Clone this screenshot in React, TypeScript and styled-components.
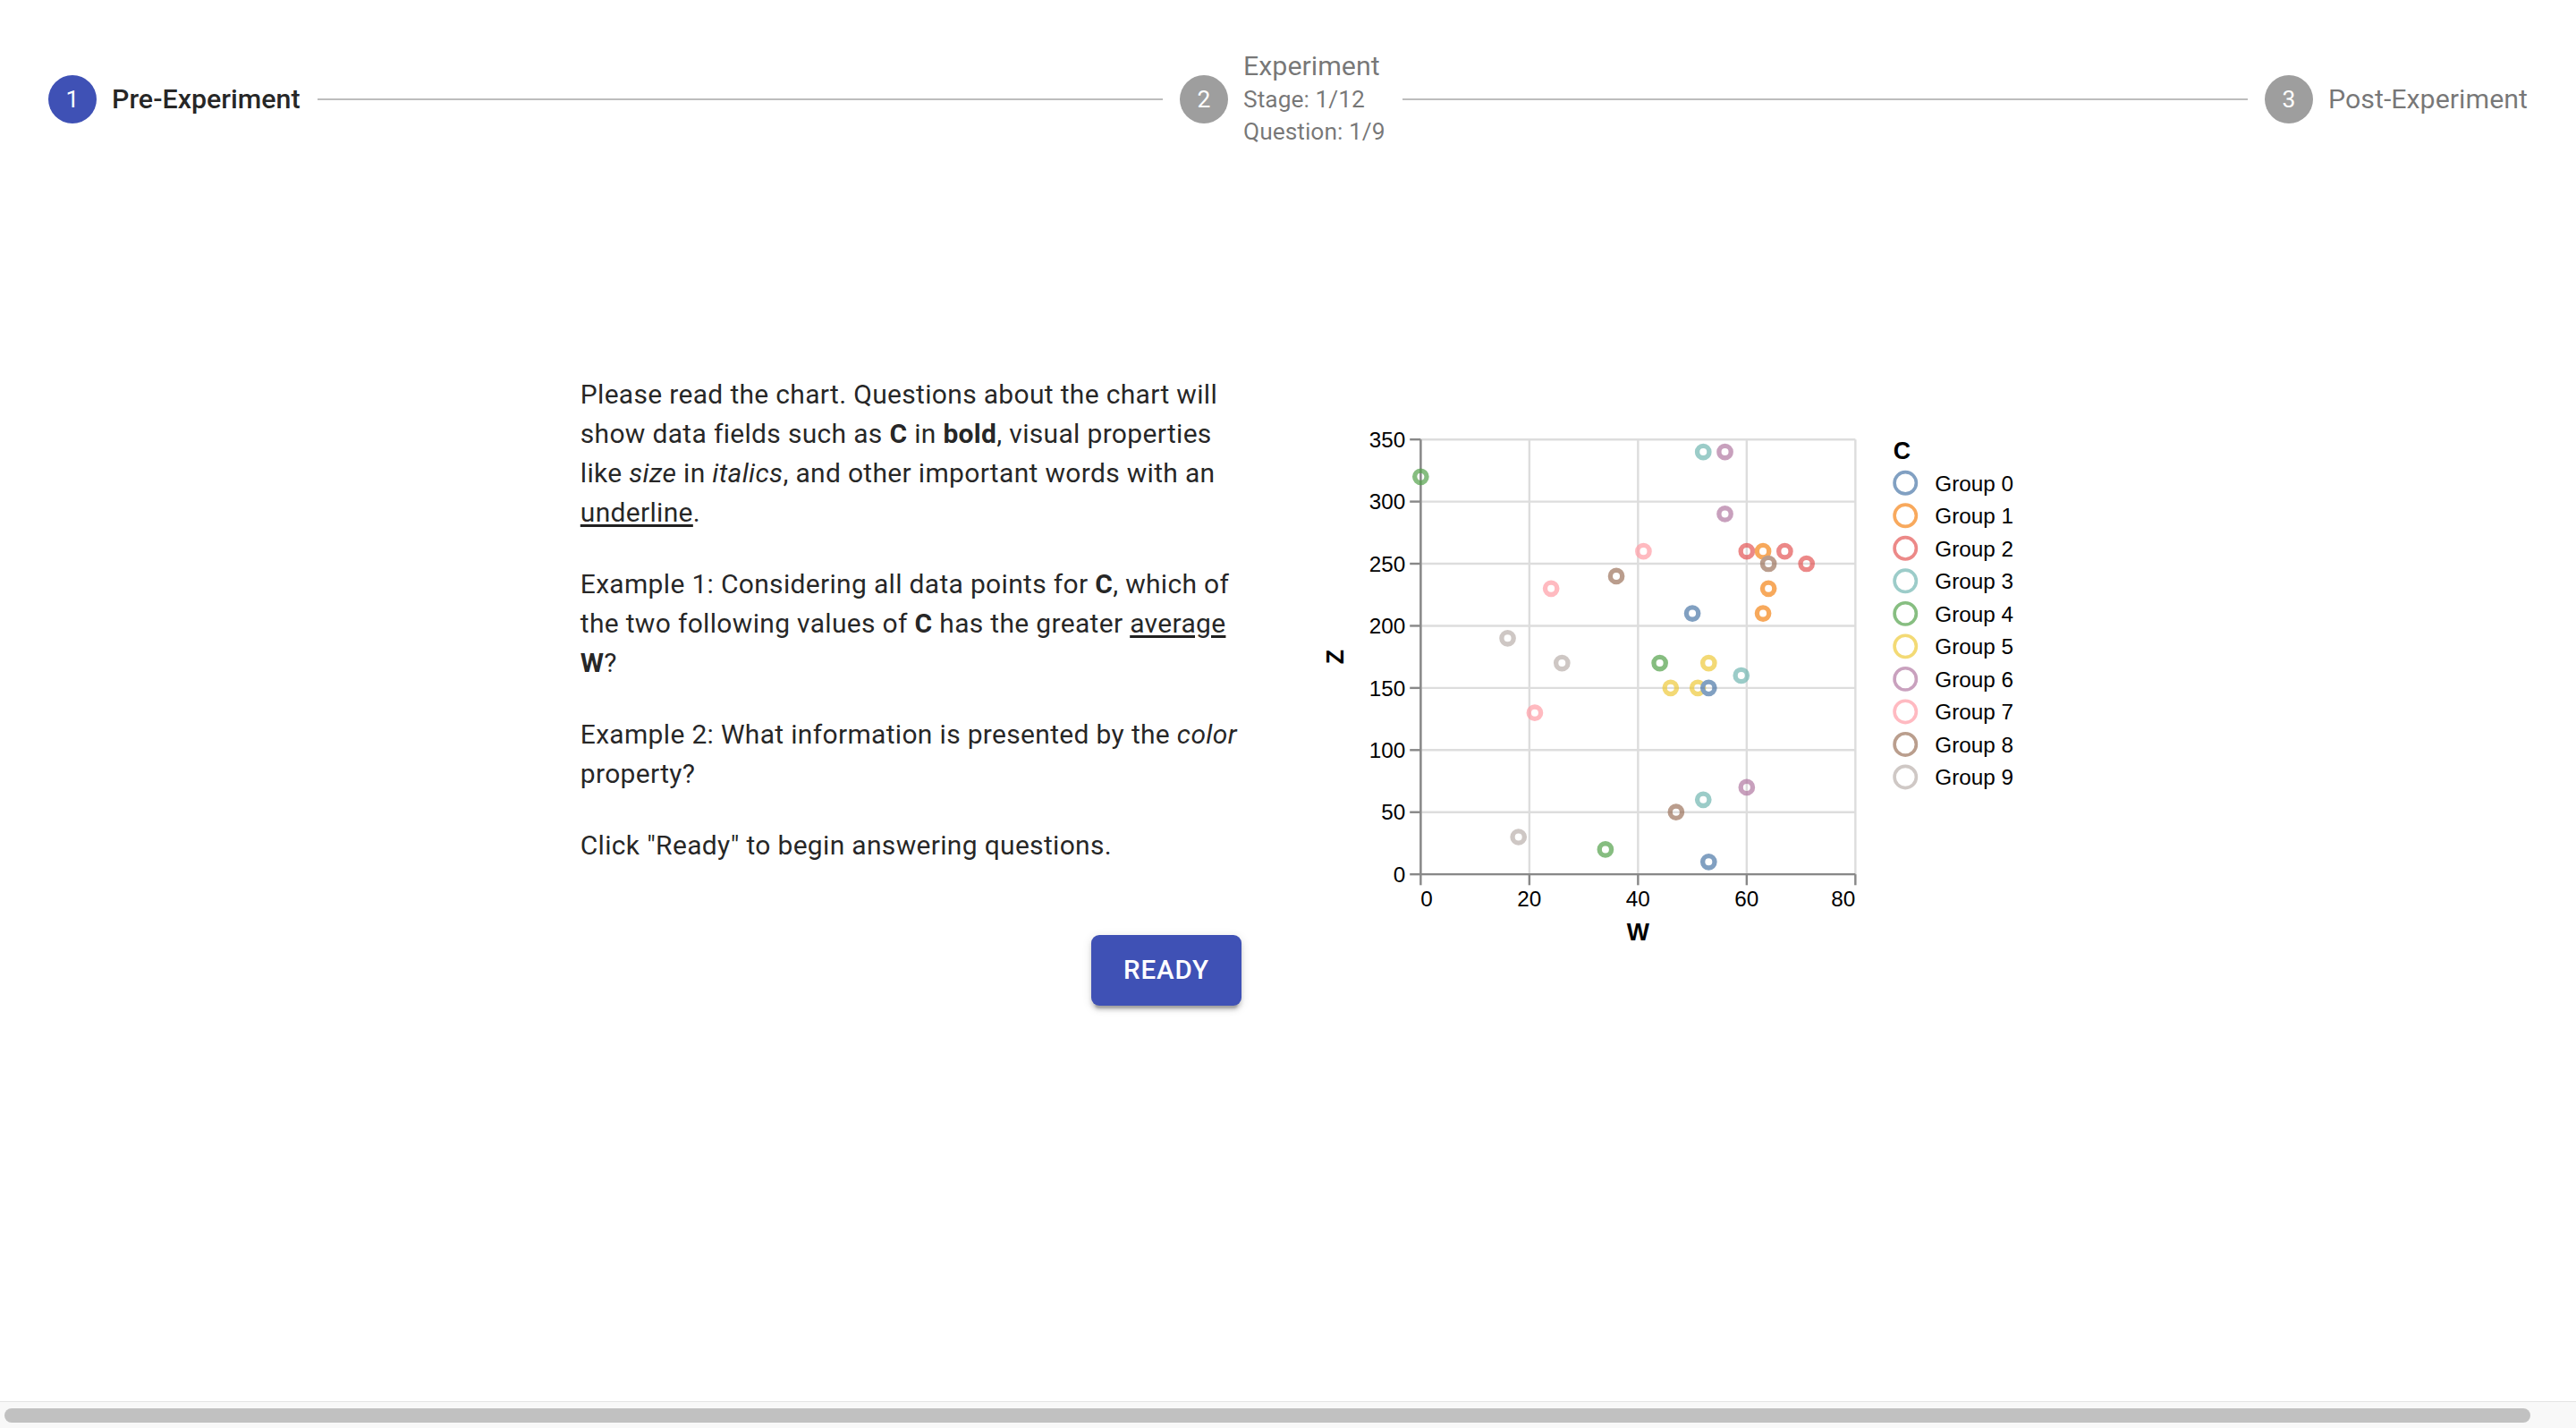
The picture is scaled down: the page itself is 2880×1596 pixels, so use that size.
import React from "react";
import styled, { createGlobalStyle } from "styled-components";

const GlobalStyle = createGlobalStyle`
  html, body {
    margin: 0;
    padding: 0;
    background: #ffffff;
  }
  body {
    font-family: Roboto, "Liberation Sans", Arial, sans-serif;
    color: rgba(0, 0, 0, 0.87);
  }
  * { box-sizing: border-box; }
`;

const Page = styled.div`
  min-height: 100vh;
`;

/* ---------- Stepper ---------- */
const Stepper = styled.nav`
  display: flex;
  align-items: center;
  padding: 56px 54px 0;
`;

const Step = styled.div`
  display: flex;
  align-items: center;
  gap: 17px;
  flex: none;
`;

const StepIcon = styled.div<{ $active?: boolean }>`
  width: 54px;
  height: 54px;
  border-radius: 50%;
  background: ${(p) => (p.$active ? "#3f51b5" : "#9e9e9e")};
  color: #ffffff;
  display: flex;
  align-items: center;
  justify-content: center;
  font-size: 26.4px;
  line-height: 1;
`;

const StepText = styled.div`
  display: flex;
  flex-direction: column;
`;

const StepLabel = styled.span<{ $active?: boolean }>`
  font-size: 30.4px;
  line-height: 36.6px;
  font-weight: ${(p) => (p.$active ? 500 : 400)};
  color: ${(p) => (p.$active ? "rgba(0,0,0,0.87)" : "rgba(0,0,0,0.54)")};
`;

const StepDetail = styled.span`
  font-size: 26.4px;
  line-height: 36.6px;
  color: rgba(0, 0, 0, 0.54);
`;

const Connector = styled.div`
  flex: 1;
  height: 0;
  border-top: 2px solid #bdbdbd;
  margin: 0 19px;
`;

/* ---------- Main ---------- */
const Main = styled.main`
  display: flex;
  justify-content: center;
  align-items: flex-start;
  gap: 82px;
  padding: 253px 0 0 30px;
`;

const TextColumn = styled.section`
  width: 748px;
  display: flex;
  flex-direction: column;
`;

const Paragraph = styled.p`
  margin: 0 0 36px;
  font-size: 30px;
  line-height: 44px;
  letter-spacing: 0.01071em;
  color: rgba(0, 0, 0, 0.87);
  &:last-of-type {
    margin-bottom: 0;
  }
`;

const Field = styled.b`
  font-weight: 700;
`;

const Em = styled.i`
  font-style: italic;
`;

const Under = styled.u`
  text-decoration: underline;
  text-underline-offset: 3px;
`;

const ReadyButton = styled.button`
  align-self: flex-end;
  margin: 78px 9px 0 0;
  height: 79px;
  padding: 0 36px;
  border: none;
  border-radius: 9px;
  background: #3f51b5;
  color: #ffffff;
  font-family: Roboto, "Liberation Sans", Arial, sans-serif;
  font-weight: 500;
  font-size: 29.5px;
  letter-spacing: 0.02857em;
  text-transform: uppercase;
  cursor: pointer;
  box-shadow: 0px 6.6px 2.2px -4.4px rgba(0, 0, 0, 0.2),
    0px 4.4px 4.4px 0px rgba(0, 0, 0, 0.14),
    0px 2.2px 11px 0px rgba(0, 0, 0, 0.12);
`;

const ChartFigure = styled.figure`
  margin: 43px 0 0;
  flex: none;
  line-height: 0;
`;

/* ---------- Scrollbar ---------- */
const ScrollTrack = styled.div`
  position: fixed;
  left: 0;
  right: 0;
  bottom: 0;
  height: 30px;
  background: #f8f8f8;
  border-top: 1px solid #e4e4e4;
  display: flex;
  align-items: center;
  padding: 0 51px 0 5px;
`;

const ScrollThumb = styled.div`
  flex: 1;
  height: 16px;
  border-radius: 8px;
  background: #c1c1c1;
`;

/* ---------- Chart data ---------- */
const COLORS = [
  "#4c78a8",
  "#f58518",
  "#e45756",
  "#72b7b2",
  "#54a24b",
  "#eeca3b",
  "#b279a2",
  "#ff9da6",
  "#9d755d",
  "#bab0ac",
];

type Pt = { w: number; z: number; g: number };

const POINTS: Pt[] = [
  { w: 52, z: 340, g: 3 },
  { w: 56, z: 340, g: 6 },
  { w: 0, z: 320, g: 4 },
  { w: 56, z: 290, g: 6 },
  { w: 41, z: 260, g: 7 },
  { w: 60, z: 260, g: 2 },
  { w: 63, z: 260, g: 1 },
  { w: 67, z: 260, g: 2 },
  { w: 64, z: 250, g: 8 },
  { w: 71, z: 250, g: 2 },
  { w: 36, z: 240, g: 8 },
  { w: 24, z: 230, g: 7 },
  { w: 64, z: 230, g: 1 },
  { w: 50, z: 210, g: 0 },
  { w: 63, z: 210, g: 1 },
  { w: 16, z: 190, g: 9 },
  { w: 26, z: 170, g: 9 },
  { w: 44, z: 170, g: 4 },
  { w: 53, z: 170, g: 5 },
  { w: 59, z: 160, g: 3 },
  { w: 46, z: 150, g: 5 },
  { w: 51, z: 150, g: 5 },
  { w: 53, z: 150, g: 0 },
  { w: 21, z: 130, g: 7 },
  { w: 60, z: 70, g: 6 },
  { w: 52, z: 60, g: 3 },
  { w: 47, z: 50, g: 8 },
  { w: 18, z: 30, g: 9 },
  { w: 34, z: 20, g: 4 },
  { w: 53, z: 10, g: 0 },
];

const PLOT = 200;
const xs = (w: number) => (w / 80) * PLOT;
const ys = (z: number) => PLOT - (z / 350) * PLOT;
const Y_TICKS = [0, 50, 100, 150, 200, 250, 300, 350];
const X_TICKS = [0, 20, 40, 60, 80];
const SCALE = 2.43;
const VB = { x: -45, y: -12, w: 322, h: 252 };

const ScatterChart: React.FC = () => (
  <svg
    width={VB.w * SCALE}
    height={VB.h * SCALE}
    viewBox={`${VB.x} ${VB.y} ${VB.w} ${VB.h}`}
    fontFamily={'"Liberation Sans", Arial, Helvetica, sans-serif'}
  >
    {/* grid */}
    <g stroke="#dddddd" strokeWidth={1} fill="none">
      {X_TICKS.map((t) => (
        <line key={`gx${t}`} x1={xs(t)} x2={xs(t)} y1={0} y2={PLOT} />
      ))}
      {Y_TICKS.map((t) => (
        <line key={`gy${t}`} x1={0} x2={PLOT} y1={ys(t)} y2={ys(t)} />
      ))}
    </g>

    {/* x axis */}
    <g>
      <line x1={0} x2={PLOT} y1={PLOT} y2={PLOT} stroke="#888888" strokeWidth={1} />
      {X_TICKS.map((t, i) => (
        <g key={`xt${t}`}>
          <line x1={xs(t)} x2={xs(t)} y1={PLOT} y2={PLOT + 5} stroke="#888888" strokeWidth={1} />
          <text
            x={xs(t)}
            y={PLOT + 14.8}
            fontSize={10}
            fill="#000"
            textAnchor={i === 0 ? "start" : i === X_TICKS.length - 1 ? "end" : "middle"}
          >
            {t}
          </text>
        </g>
      ))}
      <text x={PLOT / 2} y={230.5} fontSize={11} fontWeight={700} fill="#000" textAnchor="middle">
        W
      </text>
    </g>

    {/* y axis */}
    <g>
      <line x1={0} x2={0} y1={0} y2={PLOT} stroke="#888888" strokeWidth={1} />
      {Y_TICKS.map((t) => (
        <g key={`yt${t}`}>
          <line x1={-5} x2={0} y1={ys(t)} y2={ys(t)} stroke="#888888" strokeWidth={1} />
          <text x={-7} y={ys(t) + 3.6} fontSize={10} fill="#000" textAnchor="end">
            {t}
          </text>
        </g>
      ))}
      <text
        transform={`translate(-39.5, ${PLOT / 2}) rotate(-90)`}
        y={4}
        fontSize={11}
        fontWeight={700}
        fill="#000"
        textAnchor="middle"
      >
        Z
      </text>
    </g>

    {/* points */}
    <g fill="none" strokeWidth={2.2} opacity={0.7}>
      {POINTS.map((p, i) => (
        <circle key={i} cx={xs(p.w)} cy={ys(p.z)} r={2.75} stroke={COLORS[p.g]} />
      ))}
    </g>

    {/* legend */}
    <g>
      <text x={217.5} y={8.8} fontSize={11} fontWeight={700} fill="#000">
        C
      </text>
      {COLORS.map((c, i) => {
        const cy = 20 + i * 15.03;
        return (
          <g key={`lg${i}`}>
            <circle cx={223} cy={cy} r={5} fill="none" stroke={c} strokeWidth={1.5} opacity={0.7} />
            <text x={236.6} y={cy + 3.6} fontSize={10} fill="#000">
              {`Group ${i}`}
            </text>
          </g>
        );
      })}
    </g>
  </svg>
);

export default function App() {
  return (
    <Page>
      <GlobalStyle />
      <Stepper>
        <Step>
          <StepIcon $active>1</StepIcon>
          <StepText>
            <StepLabel $active>Pre-Experiment</StepLabel>
          </StepText>
        </Step>
        <Connector />
        <Step>
          <StepIcon>2</StepIcon>
          <StepText>
            <StepLabel>Experiment</StepLabel>
            <StepDetail>Stage: 1/12</StepDetail>
            <StepDetail>Question: 1/9</StepDetail>
          </StepText>
        </Step>
        <Connector />
        <Step>
          <StepIcon>3</StepIcon>
          <StepText>
            <StepLabel>Post-Experiment</StepLabel>
          </StepText>
        </Step>
      </Stepper>

      <Main>
        <TextColumn>
          <Paragraph>
            Please read the chart. Questions about the chart will show data fields such as{" "}
            <Field>C</Field> in <Field>bold</Field>, visual properties like <Em>size</Em> in{" "}
            <Em>italics</Em>, and other important words with an <Under>underline</Under>.
          </Paragraph>
          <Paragraph>
            Example 1: Considering all data points for <Field>C</Field>, which of the two following
            values of <Field>C</Field> has the greater <Under>average</Under> <Field>W</Field>?
          </Paragraph>
          <Paragraph>
            Example 2: What information is presented by the <Em>color</Em> property?
          </Paragraph>
          <Paragraph>Click "Ready" to begin answering questions.</Paragraph>
          <ReadyButton type="button">Ready</ReadyButton>
        </TextColumn>
        <ChartFigure>
          <ScatterChart />
        </ChartFigure>
      </Main>

      <ScrollTrack>
        <ScrollThumb />
      </ScrollTrack>
    </Page>
  );
}
